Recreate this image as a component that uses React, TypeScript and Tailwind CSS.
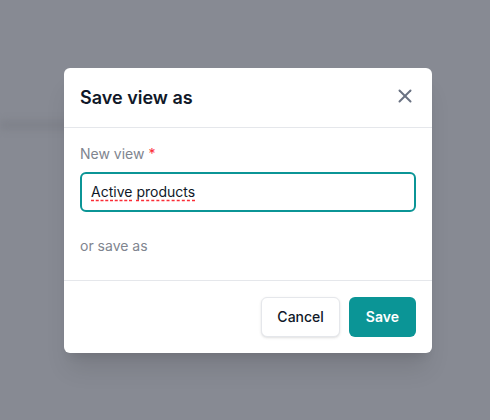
import { X } from "lucide-react";

export default function App() {
  return (
    <div
      className="relative flex h-[420px] w-[490px] items-center justify-center overflow-hidden bg-[#878a93] pl-[6px]"
      style={{ fontFamily: "Inter, 'Noto Sans', sans-serif" }}
    >
      {/* blurred page content behind the overlay */}
      <div className="absolute left-0 top-[122px] h-[6px] w-[80px] bg-[#7a7d86] blur-[4px]" />

      <div className="relative w-[368px] rounded-md bg-white shadow-xl">
        <div className="flex h-[60px] items-center justify-between border-b border-gray-200 px-4">
          <h2 className="text-[18px] font-semibold text-gray-900">Save view as</h2>
          <button type="button" className="-mt-[2px] text-gray-500" aria-label="Close">
            <X size={22} strokeWidth={2.2} />
          </button>
        </div>

        <div className="border-b border-gray-200 px-4 pb-6 pt-4">
          <label className="block text-sm text-[#80858f]">
            New view <span className="text-red-500">*</span>
          </label>
          <div className="mt-2 flex h-10 items-center rounded-md border-2 border-[#0b9596] px-[9px] text-sm text-gray-900">
            <span className="underline decoration-red-500 decoration-dashed underline-offset-[3px]">Active</span>
            <span className="w-[4px]" />
            <span className="underline decoration-red-500 decoration-dashed underline-offset-[3px]">products</span>
          </div>
          <p className="mt-6 text-sm text-[#80858f]">or save as</p>
        </div>

        <div className="flex justify-end gap-[9px] px-4 py-4">
          <button
            type="button"
            className="h-10 rounded-md border border-gray-200 bg-white px-[15px] text-sm font-medium text-gray-900 shadow-sm"
          >
            Cancel
          </button>
          <button
            type="button"
            className="h-10 rounded-md bg-[#0b9596] px-[17px] text-sm font-semibold text-white"
          >
            Save
          </button>
        </div>
      </div>
    </div>
  );
}
